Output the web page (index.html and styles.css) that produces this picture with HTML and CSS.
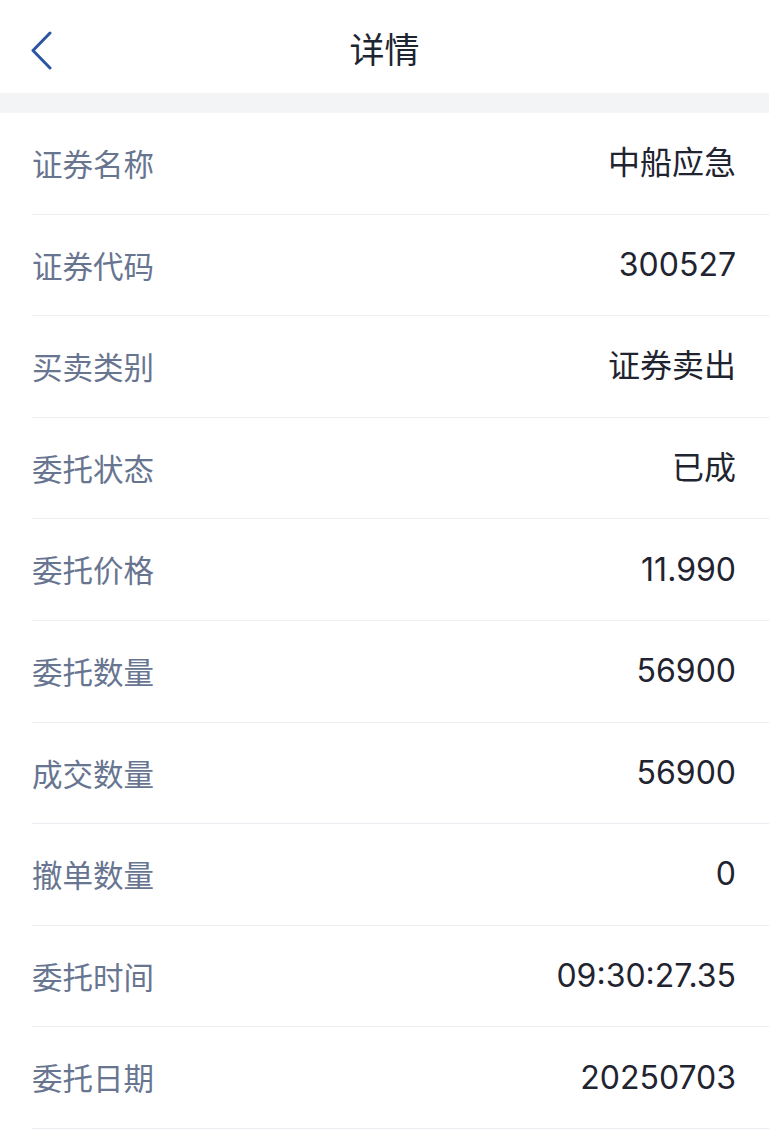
FILE: index.html
```html
<!DOCTYPE html>
<html lang="zh">
<head>
<meta charset="utf-8">
<title>详情</title>
<link rel="stylesheet" href="styles.css">
</head>
<body>
<header class="nav">
  <a class="back" aria-label="返回">
    <svg width="24" height="40" viewBox="0 0 24 40"><path d="M19 2 L2 19.5 L19 37" fill="none" stroke="#2b55a1" stroke-width="3" stroke-linecap="round" stroke-linejoin="round"/></svg>
  </a>
  <h1 class="title">详情</h1>
</header>
<div class="band"></div>
<ul class="list">
  <li class="row"><span class="label">证券名称</span><span class="value">中船应急</span></li>
  <li class="row"><span class="label">证券代码</span><span class="value">300527</span></li>
  <li class="row"><span class="label">买卖类别</span><span class="value">证券卖出</span></li>
  <li class="row"><span class="label">委托状态</span><span class="value">已成</span></li>
  <li class="row"><span class="label">委托价格</span><span class="value">11.990</span></li>
  <li class="row"><span class="label">委托数量</span><span class="value">56900</span></li>
  <li class="row"><span class="label">成交数量</span><span class="value">56900</span></li>
  <li class="row"><span class="label">撤单数量</span><span class="value">0</span></li>
  <li class="row"><span class="label">委托时间</span><span class="value">09:30:27.35</span></li>
  <li class="row"><span class="label">委托日期</span><span class="value">20250703</span></li>
</ul>
</body>
</html>
```

FILE: styles.css
```css
html, body {
  margin: 0;
  padding: 0;
  background: #ffffff;
}
body {
  font-family: "Noto Sans CJK SC", "Noto Sans", sans-serif;
  color: #1f2430;
}
.nav {
  position: relative;
  height: 93px;
  display: flex;
  align-items: center;
  justify-content: center;
}
.back {
  position: absolute;
  left: 31px;
  top: 31px;
  width: 24px;
  height: 40px;
  display: block;
}
.title {
  margin: 0;
  font-size: 35px;
  font-weight: 400;
  color: #1e2532;
  line-height: 1;
  padding-top: 2px;
}
.band {
  height: 20px;
  background: #f2f4f5;
}
.list {
  list-style: none;
  margin: 0;
  padding: 0 0 0 32px;
}
.row {
  height: 100.6px;
  border-bottom: 1px solid #ebedf2;
  display: flex;
  align-items: center;
  justify-content: space-between;
  padding-right: 33px;
}
.label {
  font-size: 30.5px;
  color: #687590;
  line-height: 1;
}
.value {
  font-family: "Inter", "Noto Sans CJK SC", sans-serif;
  font-size: 32px;
  color: #1f2430;
  line-height: 1;
}
```
